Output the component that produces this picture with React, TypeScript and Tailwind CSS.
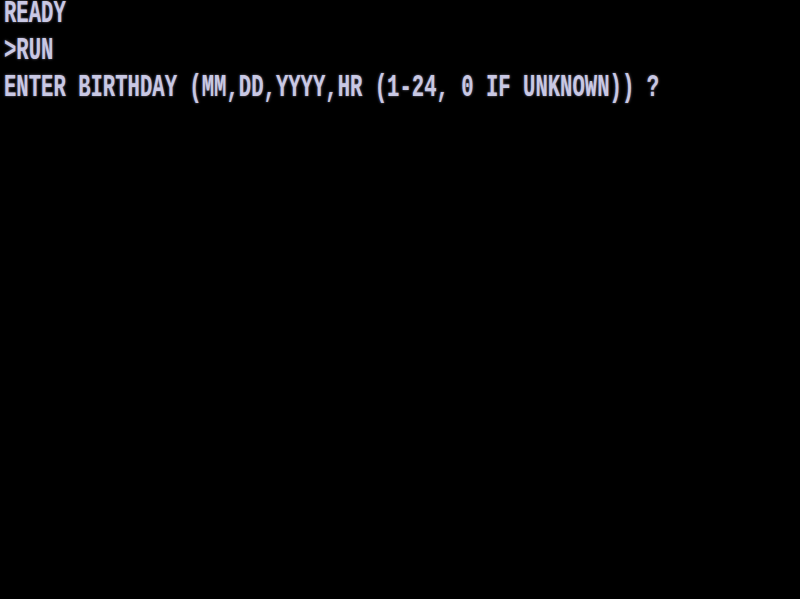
import React from 'react';

const lines = [
  'READY',
  '>RUN',
  'ENTER BIRTHDAY (MM,DD,YYYY,HR (1-24, 0 IF UNKNOWN)) ?',
];

const App = () => {
  return (
    <div className="w-[800px] h-[599px] bg-black pl-[4px] pt-[2px]">
      {lines.map((line) => (
        <div key={line} className="h-[37px]">
          <div
            className="origin-top-left scale-y-[1.5] whitespace-pre font-bold text-[20.6px] leading-[16px] text-[#c9c8e4] [text-shadow:0_0_2px_rgba(200,200,230,0.6)]"
            style={{ fontFamily: '"Liberation Mono", monospace' }}
          >
            {line}
          </div>
        </div>
      ))}
    </div>
  );
};

export default App;
